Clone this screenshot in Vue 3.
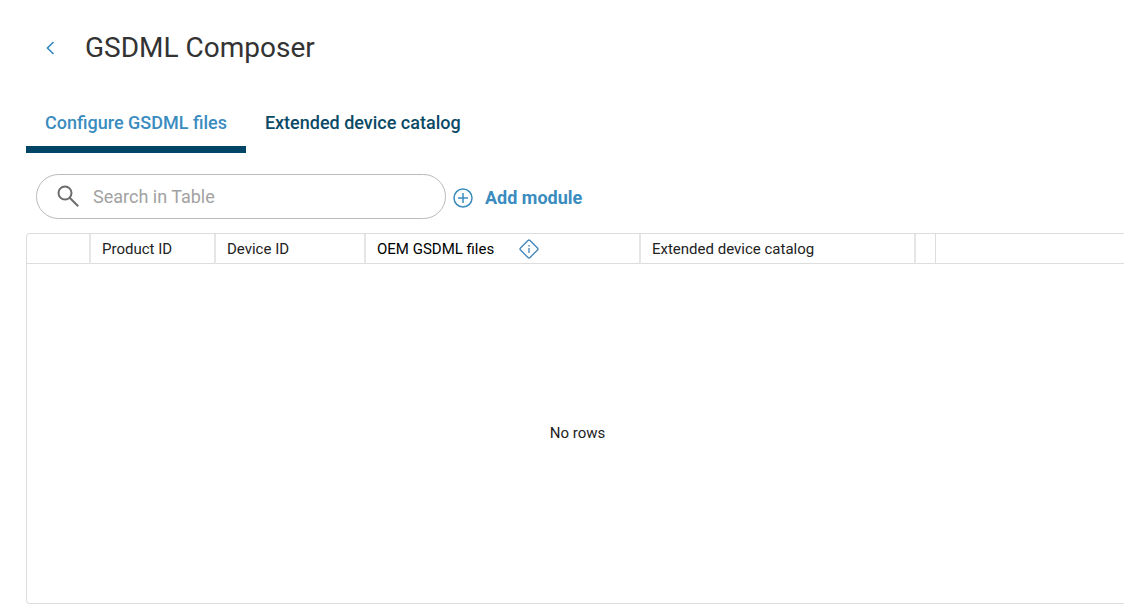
<script setup>
import { ref } from 'vue'
const query = ref('')
const tab = ref('configure')
</script>

<template>
  <main class="page">
    <header class="title-bar">
      <button class="back" type="button" aria-label="Back">
        <svg width="10" height="14" viewBox="0 0 10 14"><path d="M8.5 1 2.500 7l6 6" fill="none" stroke="currentColor" stroke-width="1.7" /></svg>
      </button>
      <h1>GSDML Composer</h1>
    </header>
    <nav class="tabs" role="tablist">
      <button type="button" role="tab" class="tab" :class="{ active: tab === 'configure' }" :aria-selected="tab === 'configure'" @click="tab = 'configure'">Configure GSDML files</button>
      <button type="button" role="tab" class="tab" :class="{ active: tab === 'catalog' }" :aria-selected="tab === 'catalog'" @click="tab = 'catalog'">Extended device catalog</button>
    </nav>
    <div class="toolbar">
      <label class="search">
        <svg width="24" height="24" viewBox="0 0 24 24" fill="none" stroke="#6c6c6c" stroke-width="2"><circle cx="8" cy="8" r="6.500" /><path d="m12.700 12.700 8.500 8.500" /></svg>
        <input v-model="query" type="text" placeholder="Search in Table" aria-label="Search in Table" />
      </label>
      <button class="add" type="button">
        <svg width="20" height="20" viewBox="0 0 20 20" fill="none" stroke="currentColor" stroke-width="1.5"><circle cx="10" cy="10" r="9" /><path d="M10 5v10M5 10h10" /></svg>
        <span>Add module</span>
      </button>
    </div>
    <section class="grid">
      <table>
        <colgroup><col class="c-select" /><col class="c-product" /><col class="c-device" /><col class="c-files" /><col class="c-files" /><col class="c-action" /><col /></colgroup>
        <thead>
          <tr>
            <th></th>
            <th>Product ID</th>
            <th>Device ID</th>
            <th class="oem"><div class="with-info"><span>OEM GSDML files</span>
              <svg width="20" height="20" viewBox="0 0 20 20" fill="none" stroke="#3f84bb" stroke-width="1.3"><path d="M9 1.500q1-1 2 0l7.500 7.500q1 1 0 2L11 18.500q-1 1-2 0L1.500 11q-1-1 0-2z" /><path d="M10 9v5M10 6v1.500" /></svg></div>
            </th>
            <th>Extended device catalog</th>
            <th class="narrow"></th>
            <th></th>
          </tr>
        </thead>
      </table>
      <p class="empty">No rows</p>
    </section>
  </main>
</template>

<style>
body { margin: 0; background: #fff; }
</style>

<style scoped>
* { box-sizing: border-box; }
.page { min-height: 100vh; padding: 24px 0 0 26px; display: flex; flex-direction: column; font-family: Roboto, "Liberation Sans", sans-serif; color: #222; }
button { border: 0; background: none; padding: 0; font: inherit; cursor: pointer; }
svg { display: block; flex: none; }
.title-bar { display: flex; align-items: center; height: 48px; padding-left: 19px; gap: 30px; }
.back { color: #3a8cbf; }
h1 { margin: 0; font-size: 28px; line-height: 36px; font-weight: 400; color: #333; }
.tabs { display: flex; margin-top: 28px; height: 53px; }
.tab { padding: 0 19px 1px; font-size: 18px; font-weight: 500; color: #0a4a66; border-bottom: 7px solid transparent; }
.active { color: #3a8cbf; border-bottom-color: #004466; }
.toolbar { display: flex; align-items: center; margin: 21px 0 14px; padding-left: 10px; gap: 7px; }
.search { display: flex; align-items: center; gap: 12px; width: 410px; height: 45px; padding: 0 20px; border: 1px solid #bbb; border-radius: 23px; }
.search input { flex: 1; min-width: 0; border: 0; outline: 0; padding: 0; background: none; font: 400 18px Roboto, sans-serif; color: #222; }
.search input::placeholder { color: #a2a2a2; opacity: 1; }
.add { display: flex; align-items: center; gap: 12px; padding-top: 2px; color: #3a8cbf; font-size: 18px; font-weight: 700; }
.grid { flex: 1; display: flex; flex-direction: column; margin-bottom: 1px; border: 1px solid #ddd; border-right: 0; border-radius: 4px 0 0 4px; }
table { width: 100%; table-layout: fixed; border-collapse: separate; border-spacing: 0; }
.c-select { width: 64px; } .c-product { width: 125px; } .c-device { width: 150px; } .c-files { width: 275px; } .c-action { width: 20px; }
th { height: 30px; padding: 0 11px; text-align: left; font-size: 15px; line-height: 20px; font-weight: 400; border-right: 2px solid #e6e6e6; border-bottom: 1px solid #ddd; white-space: nowrap; }
.narrow { padding: 0; border-right: 1px solid #ddd; }
th:last-child { border-right: 0; }
.oem { color: #000; }
.with-info { display: flex; align-items: center; gap: 25px; }
.empty { flex: 1; display: flex; align-items: center; justify-content: center; margin: 0; padding: 0 0 2px 4px; font-size: 15px; }
</style>
